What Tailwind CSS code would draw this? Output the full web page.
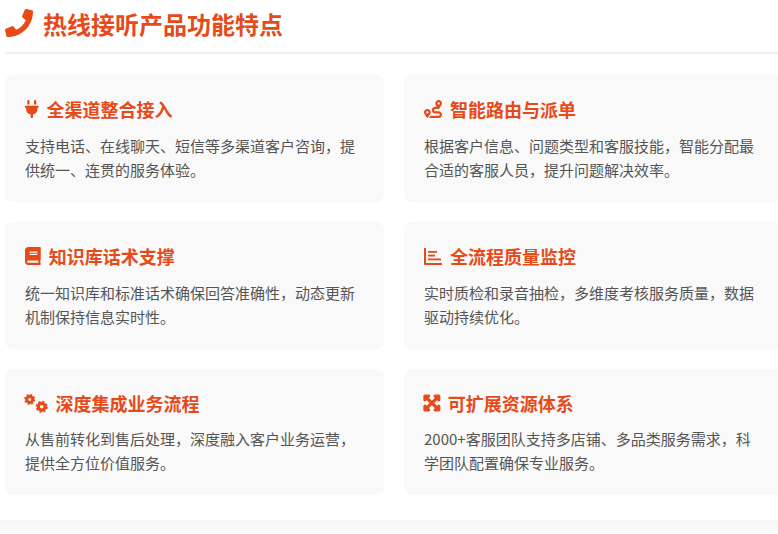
<!DOCTYPE html>
<html lang="zh-CN"><head><meta charset="utf-8">
<script src="https://cdn.jsdelivr.net/npm/@tailwindcss/browser@4"></script>
</head>
<body class="w-[778px] h-[534px] overflow-hidden bg-white font-['Noto_Sans_CJK_SC','Noto_Sans',sans-serif] leading-[1.6]">
<div class="h-[520px] pl-[5px] overflow-hidden">
<div class="w-[783px] h-[520px]">
<h2 class="flex items-center gap-[10px] h-[54px] pb-[4px] border-b-2 border-[#f0f0f0] text-[24px] font-bold text-[#e64a19] mb-[21px]">
<svg class="w-[28px] h-[28px] mb-[2px] shrink-0 fill-[#e64a19]" viewBox="0 0 512 512"><path d="M493.4 24.6l-104-24c-11.300-2.600-22.900 3.300-27.500 13.900l-48 112c-4.200 9.800-1.400 21.300 6.900 28l60.600 49.600c-36 76.700-98.900 140.500-177.200 177.200l-49.600-60.600c-6.800-8.300-18.200-11.100-28-6.900l-112 48C3.900 366.500-2 378.100.6 389.400l24 104C27.100 504.200 36.700 512 48 512c256.100 0 464-207.500 464-464 0-11.200-7.700-20.900-18.600-23.400z"/></svg>
热线接听产品功能特点</h2>
<div class="grid grid-cols-[379px_379px] gap-[20px]">

<div class="bg-[#f9f9f9] rounded-[8px] p-[20px]">
<h3 class="flex items-center gap-[8px] text-[18px] font-bold text-[#e64a19] mb-[10px]">
<svg class="w-[13.500px] h-[18px] fill-[#e64a19]" viewBox="0 0 384 512"><path d="M320 32a32 32 0 0 0-64 0v96h64zm48 128H16a16 16 0 0 0-16 16v32a16 16 0 0 0 16 16h16v32a160.070 160.070 0 0 0 128 156.800V512h64v-99.200A160.070 160.070 0 0 0 352 256v-32h16a16 16 0 0 0 16-16v-32a16 16 0 0 0-16-16zM128 32a32 32 0 0 0-64 0v96h64z"/></svg>
全渠道整合接入</h3>
<p class="text-[15px] text-[#555]">支持电话、在线聊天、短信等多渠道客户咨询，提供统一、连贯的服务体验。</p>
</div>

<div class="bg-[#f9f9f9] rounded-[8px] p-[20px]">
<h3 class="flex items-center gap-[8px] text-[18px] font-bold text-[#e64a19] mb-[10px]">
<svg class="w-[18px] h-[18px] fill-[#e64a19]" viewBox="0 0 512 512"><path d="M416 320h-96c-17.600 0-32-14.400-32-32s14.400-32 32-32h96s96-107 96-160-43-96-96-96-96 43-96 96c0 25.500 22.200 63.400 45.300 96H320c-52.900 0-96 43.100-96 96s43.100 96 96 96h96c17.600 0 32 14.400 32 32s-14.400 32-32 32H185.500c-16 24.800-33.800 47.700-47.300 64H416c52.900 0 96-43.100 96-96s-43.100-96-96-96zm0-256c17.700 0 32 14.300 32 32s-14.300 32-32 32-32-14.300-32-32 14.300-32 32-32zM96 256c-53 0-96 43-96 96s96 160 96 160 96-107 96-160-43-96-96-96zm0 128c-17.700 0-32-14.300-32-32s14.300-32 32-32 32 14.300 32 32-14.300 32-32 32z"/></svg>
智能路由与派单</h3>
<p class="text-[15px] text-[#555]">根据客户信息、问题类型和客服技能，智能分配最合适的客服人员，提升问题解决效率。</p>
</div>

<div class="bg-[#f9f9f9] rounded-[8px] p-[20px]">
<h3 class="flex items-center gap-[8px] text-[18px] font-bold text-[#e64a19] mb-[10px]">
<svg class="w-[15.750px] h-[18px] fill-[#e64a19]" viewBox="0 0 448 512"><path d="M448 360V24c0-13.300-10.700-24-24-24H96C43 0 0 43 0 96v320c0 53 43 96 96 96h328c13.300 0 24-10.700 24-24v-16c0-7.500-3.500-14.300-8.900-18.700-4.200-15.400-4.200-59.300 0-74.700 5.400-4.300 8.900-11.100 8.900-18.600zM128 134c0-3.300 2.700-6 6-6h212c3.300 0 6 2.700 6 6v20c0 3.300-2.700 6-6 6H134c-3.300 0-6-2.700-6-6v-20zm0 64c0-3.300 2.700-6 6-6h212c3.300 0 6 2.700 6 6v20c0 3.300-2.700 6-6 6H134c-3.300 0-6-2.700-6-6v-20zm253.400 250H96c-17.700 0-32-14.300-32-32 0-17.600 14.400-32 32-32h285.400c-1.900 17.100-1.900 46.900 0 64z"/></svg>
知识库话术支撑</h3>
<p class="text-[15px] text-[#555]">统一知识库和标准话术确保回答准确性，动态更新机制保持信息实时性。</p>
</div>

<div class="bg-[#f9f9f9] rounded-[8px] p-[20px]">
<h3 class="flex items-center gap-[8px] text-[18px] font-bold text-[#e64a19] mb-[10px]">
<svg class="w-[18px] h-[18px] fill-[#e64a19]" viewBox="0 0 18 18"><path d="M0 1h2v15h16v2H1a1 1 0 0 1-1-1z"/><rect x="4" y="4" width="9" height="1.800"/><rect x="4" y="7.700" width="7" height="1.800"/><rect x="4" y="11.500" width="13" height="1.800"/></svg>
全流程质量监控</h3>
<p class="text-[15px] text-[#555]">实时质检和录音抽检，多维度考核服务质量，数据驱动持续优化。</p>
</div>

<div class="bg-[#f9f9f9] rounded-[8px] p-[20px]">
<h3 class="flex items-center gap-[8px] text-[18px] font-bold text-[#e64a19] mb-[10px]">
<svg class="w-[22.500px] h-[18px] fill-none stroke-[#e64a19] overflow-visible" viewBox="0 0 22.500 18"><circle cx="4.700" cy="5.400" r="3" stroke-width="3"/><circle cx="4.700" cy="5.400" r="4.700" stroke-width="1.700" stroke-dasharray="1.900 1.790"/><circle cx="16.700" cy="12.800" r="3.400" stroke-width="3.200"/><circle cx="16.700" cy="12.800" r="5.200" stroke-width="1.700" stroke-dasharray="2.100 1.980"/></svg>
深度集成业务流程</h3>
<p class="text-[15px] text-[#555]">从售前转化到售后处理，深度融入客户业务运营，提供全方位价值服务。</p>
</div>

<div class="bg-[#f9f9f9] rounded-[8px] p-[20px]">
<h3 class="flex items-center gap-[8px] text-[18px] font-bold text-[#e64a19] mb-[10px]">
<svg class="w-[15.750px] h-[18px] fill-[#e64a19] stroke-[#e64a19] overflow-visible" viewBox="0 0 448 512" stroke-width="36"><path d="M448 344v112a23.940 23.940 0 0 1-24 24H312c-21.390 0-32.090-25.900-17-41l36.200-36.200L224 295.600 116.770 402.900 153 439c15.090 15.100 4.390 41-17 41H24a23.940 23.940 0 0 1-24-24V344c0-21.400 25.890-32.100 41-17l36.190 36.200L184.460 256 77.180 148.700 41 185c-15.100 15.100-41 4.400-41-17V56a23.940 23.940 0 0 1 24-24h112c21.390 0 32.090 25.900 17 41l-36.200 36.200L224 216.400l107.230-107.300L295 73c-15.090-15.100-4.390-41 17-41h112a23.940 23.940 0 0 1 24 24v112c0 21.400-25.890 32.100-41 17l-36.190-36.200L263.540 256l107.280 107.300L407 327.100c15.100-15.200 41-4.500 41 16.900z"/></svg>
可扩展资源体系</h3>
<p class="text-[15px] text-[#555]">2000+客服团队支持多店铺、多品类服务需求，科学团队配置确保专业服务。</p>
</div>

</div>
</div>
</div>
<div class="h-[14px] bg-gradient-to-b from-[#f6f6f6] to-[#fcfcfc]"></div>
</body></html>
